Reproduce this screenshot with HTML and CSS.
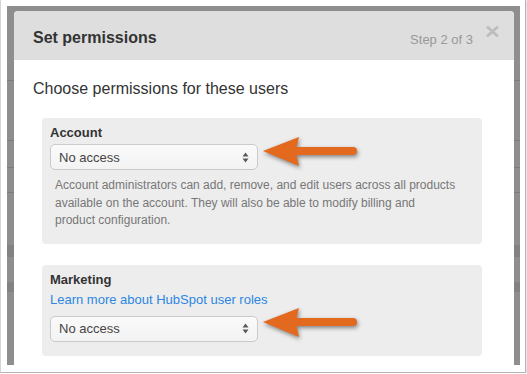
FILE: index.html
```html
<!DOCTYPE html>
<html lang="en">
<head>
  <meta charset="UTF-8" />
  <title>Set permissions</title>
  <link rel="stylesheet" href="styles.css">
</head>
<body>
  <div class="shot">
    <div class="backdrop">
      <div class="modal">
        <div class="modal-header">
          <h2>Set permissions</h2>
          <span class="step">Step 2 of 3</span>
          <svg class="close" width="13" height="11" viewBox="0 0 13 11">
            <path d="M2 1.5 L11 9.5 M11 1.5 L2 9.5" stroke="#bdbdbd" stroke-width="3" stroke-linecap="round"/>
          </svg>
        </div>

        <div class="modal-body">
          <p class="lead">Choose permissions for these users</p>

          <div class="perm-box">
            <div class="perm-title">Account</div>
            <div class="select">
              <span>No access</span>
              <svg width="7" height="11" viewBox="0 0 7 11">
                <path d="M3.5 0.5 L6.5 4.5 L0.5 4.5 Z M0.5 6.5 L6.5 6.5 L3.5 10.5 Z" fill="#5a5a5a"/>
              </svg>
            </div>
            <p class="help">Account administrators can add, remove, and edit users across all products available on the account. They will also be able to modify billing and product configuration.</p>
            <svg class="arrow arrow-account" width="100" height="40" viewBox="0 0 100 40">
              <path d="M2 19 L38 5 L35.5 15 L92 15 A4 4 0 0 1 92 23 L35.5 23 L38 34 Z" fill="#e2691e"/>
            </svg>
          </div>

          <div class="perm-box">
            <div class="perm-title">Marketing</div>
            <a class="learn" href="#">Learn more about HubSpot user roles</a>
            <div class="select">
              <span>No access</span>
              <svg width="7" height="11" viewBox="0 0 7 11">
                <path d="M3.5 0.5 L6.5 4.5 L0.5 4.5 Z M0.5 6.5 L6.5 6.5 L3.5 10.5 Z" fill="#5a5a5a"/>
              </svg>
            </div>
            <svg class="arrow arrow-marketing" width="100" height="40" viewBox="0 0 100 40">
              <path d="M2 19 L38 5 L35.5 15 L92 15 A4 4 0 0 1 92 23 L35.5 23 L38 34 Z" fill="#e2691e"/>
            </svg>
          </div>
        </div>
      </div>
    </div>
  </div>
</body>
</html>
```

FILE: styles.css
```css
* {
  box-sizing: border-box;
}

body {
  margin: 0;
  background: #fff;
  font-family: 'Liberation Sans', Arial, sans-serif;
  color: #333;
}

/* screenshot frame */
.shot {
  width: 526px;
  height: 373px;
  padding: 6px 5px 7px 6px;
  border-left: 1px solid #d4d4d4;
  border-right: 1px solid #b5b5b5;
  border-bottom: 1px solid #b5b5b5;
  box-shadow: 1px 1px 2px rgba(0, 0, 0, 0.15);
}

/* dimmed page behind the dialog */
.backdrop {
  height: 359px;
  padding: 5px 6px 0 7px;
  background-color: #8e8e8e;
  background-image:
    linear-gradient(to bottom,
      transparent 74px, #7d7d7d 74px, #7d7d7d 75px, transparent 75px,
      transparent 134px, #7d7d7d 134px, #7d7d7d 135px, transparent 135px,
      transparent 161px, #7d7d7d 161px, #7d7d7d 162px, transparent 162px,
      transparent 186px, #7d7d7d 186px, #7d7d7d 187px, transparent 187px,
      transparent 239px, #828282 239px, #828282 251px, transparent 251px,
      transparent 276px, #828282 276px, #828282 286px, transparent 286px);
  overflow: hidden;
}

.modal {
  position: relative;
  height: 100%;
  background: #fff;
  border-radius: 4px 4px 0 0;
  overflow: hidden;
}

.modal-header {
  display: flex;
  align-items: center;
  height: 49px;
  padding: 5px 41px 0 19px;
  background: #dedede;
}

.modal-header h2 {
  flex: 1;
  margin: 0;
  font-size: 16px;
  font-weight: bold;
  color: #333;
}

.step {
  margin-top: 3px;
  font-size: 13px;
  color: #999;
}

.close {
  position: absolute;
  top: 15px;
  right: 15px;
}

.modal-body {
  padding: 0 0 0 19px;
}

.lead {
  margin: 19px 0;
  font-size: 16px;
  line-height: 20px;
  color: #333;
}

.perm-box {
  position: relative;
  width: 440px;
  margin: 0 0 21px 9px;
  padding: 7px 8px 14px;
  background: #ededed;
  border-radius: 4px;
}

.perm-title {
  font-size: 13px;
  line-height: 16px;
  font-weight: bold;
  color: #333;
}

.select {
  display: flex;
  align-items: center;
  justify-content: space-between;
  width: 208px;
  height: 26px;
  margin-top: 3px;
  padding: 0 8px 0 8px;
  background: linear-gradient(#fafafa, #f3f3f3);
  border: 1px solid #cacaca;
  border-radius: 5px;
  font-size: 13px;
  color: #444;
}

.help {
  max-width: 402px;
  margin: 7px 0 0 5px;
  font-size: 12px;
  line-height: 17.5px;
  color: #777;
}

.learn {
  display: block;
  margin: 4px 0 8px;
  font-size: 13px;
  line-height: 16px;
  color: #2c86e3;
  text-decoration: none;
}

.learn + .select {
  margin-top: 0;
}

/* annotation arrows */
.arrow {
  position: absolute;
  left: 219px;
  filter: drop-shadow(1px 2px 2px rgba(0, 0, 0, 0.45));
}

.arrow-account {
  top: 14px;
}

.arrow-marketing {
  top: 38px;
}
```
